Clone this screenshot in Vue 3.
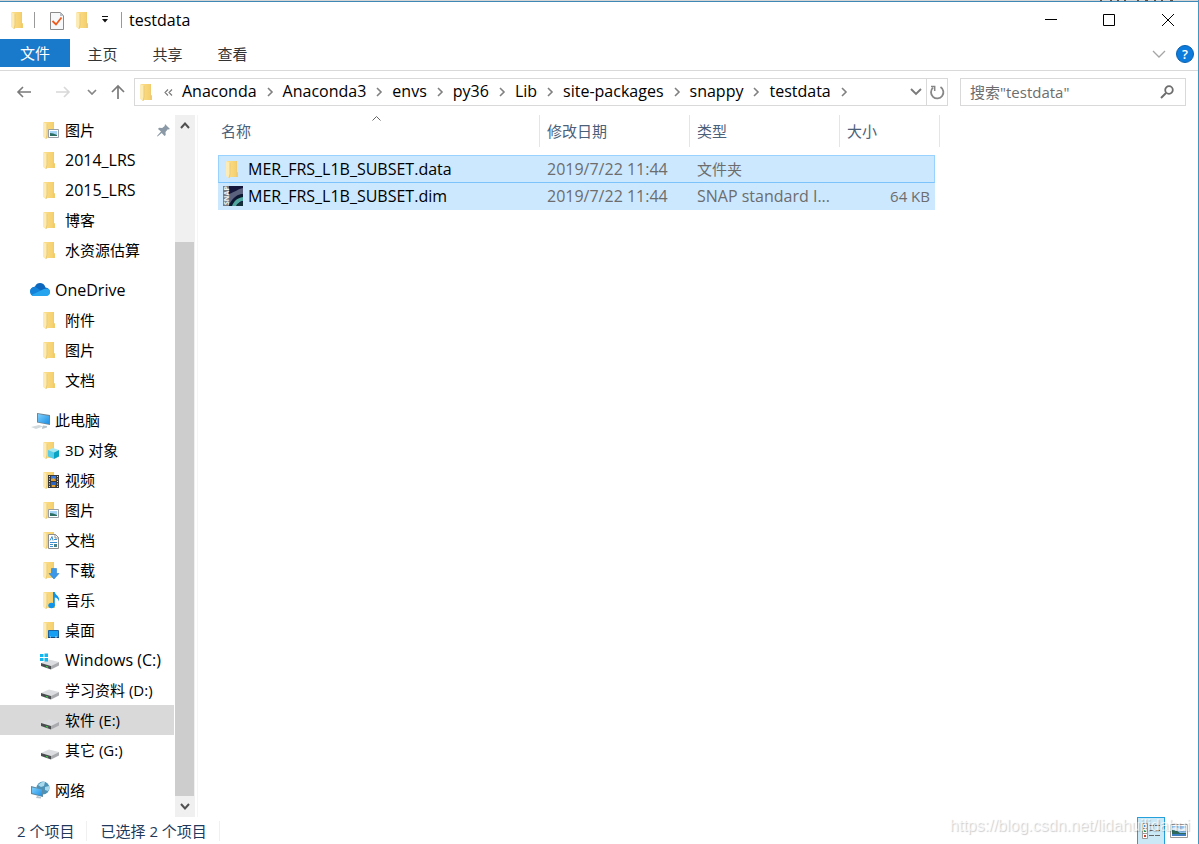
<script setup>
import { ref } from 'vue'

const tabs = ['主页', '共享', '查看']
const crumbs = ['Anaconda', 'Anaconda3', 'envs', 'py36', 'Lib', 'site-packages', 'snappy', 'testdata']
const query = ref('')

const groups = [
  {
    items: [
      { label: '图片', icon: 'picture', pinned: true },
      { label: '2014_LRS', icon: 'folder' },
      { label: '2015_LRS', icon: 'folder' },
      { label: '博客', icon: 'folder' },
      { label: '水资源估算', icon: 'folder' },
    ],
  },
  {
    items: [
      { label: 'OneDrive', icon: 'cloud', root: true },
      { label: '附件', icon: 'folder' },
      { label: '图片', icon: 'folder' },
      { label: '文档', icon: 'folder' },
    ],
  },
  {
    items: [
      { label: '此电脑', icon: 'pc', root: true },
      { label: '3D 对象', icon: 'cube' },
      { label: '视频', icon: 'video' },
      { label: '图片', icon: 'picture' },
      { label: '文档', icon: 'document' },
      { label: '下载', icon: 'download' },
      { label: '音乐', icon: 'music' },
      { label: '桌面', icon: 'desktop' },
      { label: 'Windows (C:)', icon: 'windrive' },
      { label: '学习资料 (D:)', icon: 'drive' },
      { label: '软件 (E:)', icon: 'drive', active: true },
      { label: '其它 (G:)', icon: 'drive' },
    ],
  },
  { items: [{ label: '网络', icon: 'network', root: true }] },
]

const folderBased = ['folder', 'picture', 'cube', 'video', 'document', 'download', 'music', 'desktop']
const isLatin = (s) => /^[ -~]+$/.test(s)

const files = [
  { name: 'MER_FRS_L1B_SUBSET.data', date: '2019/7/22 11:44', type: '文件夹', size: '', icon: 'folder', focused: true },
  { name: 'MER_FRS_L1B_SUBSET.dim', date: '2019/7/22 11:44', type: 'SNAP standard I...', size: '64 KB', icon: 'snap' },
]
</script>

<template>
  <div class="window">
    <svg class="defs" aria-hidden="true">
      <defs>
        <linearGradient id="fold" x1="0" y1="0" x2="1" y2="0">
          <stop offset="0" stop-color="#fbdf8b" />
          <stop offset="1" stop-color="#f4cd68" />
        </linearGradient>
        <linearGradient id="screen" x1="0" y1="0" x2="1" y2="1">
          <stop offset="0" stop-color="#7fd0fb" />
          <stop offset="1" stop-color="#1c8fe6" />
        </linearGradient>
        <symbol id="folder" viewBox="0 0 20 20">
          <path d="M4 2h10v11l1 1v4H4z" fill="url(#fold)" />
          <path d="M13 2h1v11l1 1v4h-2z" fill="#f0cb70" />
          <path d="M3 2l4 2v11l-1 4-3-2z" fill="#fdebb6" />
          <path d="M7 4v11l-1 4" fill="none" stroke="#ebca74" stroke-width="1" />
        </symbol>
      </defs>
    </svg>

    <div class="backdrop" aria-hidden="true">
      <svg width="74" height="1" viewBox="0 0 74 1"><path d="M0 .5h2M10 .5h2M17 .5h2M24 .5h2M37 .5h2M45 .5h3M54 .5h2M61 .5h2M70 .5h3" stroke="#5c5247" /></svg>
    </div>

    <header class="titlebar">
      <svg class="ic20 app-icon" viewBox="0 0 20 20"><use href="#folder" /></svg>
      <span class="bar"></span>
      <button class="quick" aria-label="属性">
        <svg class="ic20" viewBox="0 0 20 20">
          <path d="M3.500 2.500h10l3 3v14h-13z" fill="#f7f8f9" stroke="#8b8b8b" />
          <path d="M13 2l4 4h-4z" fill="#b9bfc4" />
          <path d="M5.500 11l3.500 3.500 5.500-7" fill="none" stroke="#ee5a1c" stroke-width="1.8" />
        </svg>
      </button>
      <button class="quick quick-new" aria-label="新建文件夹">
        <svg class="ic20" viewBox="0 0 20 20"><use href="#folder" /></svg>
      </button>
      <button class="quick-more" aria-label="自定义快速访问工具栏">
        <svg width="8" height="8" viewBox="0 0 8 8"><path d="M1 0h6v1H1zM1 3h6L4 6.500z" fill="#111" /></svg>
      </button>
      <span class="bar"></span>
      <h1 class="title">testdata</h1>
      <div class="controls">
        <button aria-label="最小化"><svg width="12" height="12" viewBox="0 0 12 12"><path d="M0 5.500h12" stroke="#000" /></svg></button>
        <button aria-label="最大化"><svg width="12" height="12" viewBox="0 0 12 12"><path d="M.5.5h11v11H.5z" stroke="#000" fill="none" /></svg></button>
        <button aria-label="关闭"><svg width="12" height="12" viewBox="0 0 12 12"><path d="M0 0l12 12M12 0L0 12" stroke="#000" /></svg></button>
      </div>
    </header>

    <nav class="ribbon">
      <button class="file-tab">文件</button>
      <button v-for="t in tabs" :key="t" class="tab">{{ t }}</button>
      <button class="expand" aria-label="展开功能区">
        <svg width="14" height="8" viewBox="0 0 14 8"><path d="M1 1l6 6 6-6" fill="none" stroke="#a5a5a5" stroke-width="1.3" /></svg>
      </button>
      <button class="help" aria-label="帮助">?</button>
    </nav>

    <div class="address-row">
      <button class="nav-btn back" aria-label="后退">
        <svg width="16" height="12" viewBox="0 0 16 12"><path d="M15 6H2M7 1L2 6l5 5" fill="none" stroke="#7a7a7a" stroke-width="1.6" /></svg>
      </button>
      <button class="nav-btn forward" aria-label="前进">
        <svg width="16" height="12" viewBox="0 0 16 12"><path d="M1 6h13M9 1l5 5-5 5" fill="none" stroke="#d8d8d8" stroke-width="1.6" /></svg>
      </button>
      <button class="nav-btn recent" aria-label="最近的位置">
        <svg width="10" height="6" viewBox="0 0 10 6"><path d="M1 1l4 4 4-4" fill="none" stroke="#868686" stroke-width="1.7" /></svg>
      </button>
      <button class="nav-btn up" aria-label="上移">
        <svg width="14" height="16" viewBox="0 0 14 16"><path d="M7 15V2M1 8l6-6 6 6" fill="none" stroke="#7a7a7a" stroke-width="1.7" /></svg>
      </button>
      <div class="address">
        <svg class="ic20 addr-icon" viewBox="0 0 20 20"><use href="#folder" /></svg>
        <svg class="overflow" width="9" height="7" viewBox="0 0 9 7"><path d="M4 .5l-3 3 3 3M8 .5l-3 3 3 3" fill="none" stroke="#777" stroke-width="1.1" /></svg>
        <template v-for="c in crumbs" :key="c">
          <a href="#" class="crumb">{{ c }}</a>
          <svg class="sep" width="26" height="10" viewBox="0 0 26 10"><path d="M11 1l4 4-4 4" fill="none" stroke="#808080" stroke-width="1.6" /></svg>
        </template>
        <button class="drop" aria-label="以前的位置">
          <svg width="12" height="8" viewBox="0 0 12 8"><path d="M1 1l5 5 5-5" fill="none" stroke="#7a7a7a" stroke-width="1.9" /></svg>
        </button>
        <button class="refresh" aria-label="刷新">
          <svg width="16" height="16" viewBox="0 0 16 16">
            <path d="M11.500 3A6.200 6.200 0 1 1 4 3.700" fill="none" stroke="#868686" stroke-width="1.8" />
            <path d="M2 2.500h3.700V7" fill="none" stroke="#868686" stroke-width="1.5" />
          </svg>
        </button>
      </div>
      <label class="search">
        <input v-model="query" type="text" placeholder='搜索"testdata"' aria-label='搜索"testdata"' />
        <svg width="14" height="14" viewBox="0 0 14 14">
          <circle cx="9" cy="5" r="3.800" fill="none" stroke="#6d6d6d" stroke-width="1.8" />
          <path d="M6 8l-5 5" stroke="#6d6d6d" stroke-width="2" />
        </svg>
      </label>
    </div>

    <div class="body">
      <aside class="tree">
        <ul v-for="(g, gi) in groups" :key="gi" class="group">
          <li v-for="(it, i) in g.items" :key="i">
            <a href="#" class="node" :class="{ root: it.root, active: it.active }">
              <svg class="ic20" viewBox="0 0 20 20">
                <use v-if="folderBased.includes(it.icon)" href="#folder" />
                <g v-if="it.icon === 'picture'">
                  <path d="M8.500 9.500h10v8h-10z" fill="#fff" stroke="#9aa0a6" />
                  <path d="M10 11h7v5h-7z" fill="#a7d4f4" />
                  <path d="M10 13q3 0 7 2v1h-7z" fill="#2d6e63" />
                </g>
                <g v-else-if="it.icon === 'cube'">
                  <path d="M13 8l6 2-5 2.500-6-2.500z" fill="#a5e9f5" />
                  <path d="M8 10l6 2.500V19l-6-2.500z" fill="#58cdea" />
                  <path d="M19 10l-5 2.500V19l5-2.500z" fill="#09a3c4" />
                </g>
                <g v-else-if="it.icon === 'video'">
                  <path d="M8 5h11v13H8z" fill="#3a3a3a" />
                  <path d="M11 6h5v5h-5z" fill="#397be0" />
                  <path d="M11 12h5v5h-5z" fill="#2c64c4" />
                  <path d="M11 9l3-1 2 3h-5zM12 15h3v2h-3z" fill="#e0a034" />
                  <path d="M9.500 6v12M17.500 6v12" stroke="#e4e4e4" stroke-dasharray="1 1.500" />
                </g>
                <g v-else-if="it.icon === 'document'">
                  <path d="M8.500 4.500h7l3 3v11h-10z" fill="#fff" stroke="#8d8d8d" />
                  <path d="M15 4v4h4" fill="none" stroke="#8d8d8d" />
                  <path d="M10 10.500l2-4 1 4M14 9.500h3M10 12.500h7M10 14.500h3M10 16.500h3" fill="none" stroke="#3d8fd0" />
                  <path d="M14 14h3v3h-3z" fill="#4b7f87" />
                </g>
                <path v-else-if="it.icon === 'download'" d="M11.500 8.500h5v5H19L14 19l-5-5.500h2.500z" fill="#3b97e8" stroke="#2c7fcb" stroke-width=".6" />
                <g v-else-if="it.icon === 'music'" fill="#0f94ea">
                  <ellipse cx="11.500" cy="15.500" rx="3.200" ry="2.800" />
                  <path d="M13 2h1.800c.4 3.500 5.600 4 4 9.500-.3-2.500-2-3.800-4-4V16H13z" />
                </g>
                <g v-else-if="it.icon === 'desktop'">
                  <path d="M8.500 10.500h10v7h-10z" fill="#16a0f3" stroke="#1a64a3" />
                  <path d="M8 17h11v1H8z" fill="#154a7d" />
                  <path d="M10 17h1M15 17h2" stroke="#bde4ff" />
                </g>
                <g v-else-if="it.icon === 'cloud'">
                  <path d="M3 14.500C-1 13.500-.5 7.500 5 6.500 7 1.500 14 2 15.500 7.500 21 8 21 14.500 17 15.500H4z" fill="#0c67bd" />
                  <path d="M0 11.500C0 8.500 3 6.500 6 7.300l7 4.700-9 4C1.500 16 0 14 0 11.500z" fill="#1482d8" />
                  <path d="M14 9c5-2 6.500 1.500 6 4-.4 2-2 3-3.500 3H4c-1 0-2-.5-2.500-1z" fill="#27a4ee" />
                </g>
                <g v-else-if="it.icon === 'pc'">
                  <path d="M7 3l13 2v10L7 12.500z" fill="#6d8494" />
                  <path d="M8 4l11 2v8L8 12z" fill="url(#screen)" />
                  <path d="M1 17l8-2 4 1.500L6 19z" fill="#d3dade" />
                  <path d="M13 15.500l4 .5v1.500l-5 1.500v-1z" fill="#b9c5cc" />
                </g>
                <g v-else-if="it.icon === 'network'">
                  <circle cx="13" cy="8" r="6.500" fill="#4d93b8" />
                  <path d="M8 5q4-4 7-3l-1 4-3 1zM15 7l4-1q1 3-1 5l-3-1z" fill="#a9d9ec" />
                  <path d="M1 6l12 3v8L1 14z" fill="#5c8ba5" />
                  <path d="M2 7.500l10 2v6.500l-10-3z" fill="url(#screen)" />
                  <path d="M7 16l4 1v1.500l-5-.5z" fill="#b7c3ca" />
                </g>
                <g v-else-if="it.icon === 'drive' || it.icon === 'windrive'">
                  <path d="M1 13l8-3.500 10 2.500-8 4z" fill="#dcdde0" />
                  <path d="M1 13l10 3v3.500L1 16z" fill="#4a4d50" />
                  <path d="M19 12l-8 4v3.500l8-4z" fill="#a9abaf" />
                  <path d="M6 16.500l2 .6" stroke="#3fd34a" stroke-width="1.300" />
                  <path v-if="it.icon === 'windrive'" d="M0 4h3.500v3H0zM4.500 3.500H8V7H4.500zM0 8h3.500v3H0zM4.500 8H8v3.500H4.500z" fill="#12b6f0" />
                </g>
              </svg>
              <span class="label" :class="{ latin: isLatin(it.label) }">{{ it.label }}</span>
              <svg v-if="it.pinned" class="pin" width="13" height="13" viewBox="0 0 13 13">
                <path d="M8 0l5 5-1.500.5-.7-.3L8.500 8l.2 3-1.200 1L4.700 9 .5 12.500 0 12l4-4.500L1 5l1-1.200 3.200.2L7.700 2z" fill="#8a99a5" />
              </svg>
            </a>
          </li>
        </ul>
      </aside>

      <div class="scroll" aria-hidden="true">
        <button class="scroll-btn" tabindex="-1"><svg width="10" height="7" viewBox="0 0 10 7"><path d="M1 6l4-4.500L9 6" fill="none" stroke="#505050" stroke-width="2" /></svg></button>
        <div class="track"><div class="thumb"></div></div>
        <button class="scroll-btn" tabindex="-1"><svg width="10" height="7" viewBox="0 0 10 7"><path d="M1 1l4 4.500L9 1" fill="none" stroke="#505050" stroke-width="2" /></svg></button>
      </div>

      <main class="content">
        <table class="files">
          <colgroup>
            <col class="c-name" /><col class="c-mid" /><col class="c-mid" /><col class="c-size" /><col class="c-edge" />
          </colgroup>
          <thead>
            <tr>
              <th>
                <div class="head first">名称</div>
                <svg class="sort" width="9" height="5" viewBox="0 0 9 5"><path d="M.5 4.500l4-4 4 4" fill="none" stroke="#666" /></svg>
              </th>
              <th><div class="head">修改日期</div></th>
              <th><div class="head">类型</div></th>
              <th colspan="2"><div class="head">大小</div></th>
            </tr>
          </thead>
          <tbody>
            <tr v-for="f in files" :key="f.name" :class="{ focused: f.focused }">
              <td>
                <div class="file">
                  <svg v-if="f.icon === 'folder'" class="ic20" viewBox="0 0 20 20"><use href="#folder" /></svg>
                  <svg v-else class="ic20" viewBox="0 0 20 20">
                    <path d="M0 0h20v20H0z" fill="#14163c" />
                    <path d="M6 8C12 6 15 3 20 2v6C14 8 10 12 7 17H6z" fill="#59617c" />
                    <path d="M7 19C10 13 14 9 20 8v3c-5 1-7 4-9 9H7z" fill="#0b1a30" />
                    <path d="M9 20c2-5 5-8 11-9v4c-3 0-5 2-6 5z" fill="#4fa79f" />
                    <path d="M13 20c1-3 4-4 7-4v4z" fill="#17313b" />
                    <path d="M0 0h6v20H0z" fill="#777a80" />
                    <text class="snap-text" transform="translate(6 19) rotate(-90)">SNAP</text>
                  </svg>
                  <span class="latin">{{ f.name }}</span>
                </div>
              </td>
              <td class="meta latin">{{ f.date }}</td>
              <td class="meta" :class="{ latin: isLatin(f.type) }">{{ f.type }}</td>
              <td class="meta size">{{ f.size }}</td>
              <td class="edge"></td>
            </tr>
          </tbody>
        </table>
      </main>
    </div>

    <footer class="status">
      <span class="stat">2 个项目</span>
      <span class="stat">已选择 2 个项目</span>
      <div class="views">
        <button class="view on" aria-label="详细信息">
          <svg width="20" height="18" viewBox="0 0 20 18">
            <path d="M1.500 1.500h5v5h-5zM1.500 6.500h5v5h-5zM1.500 11.500h5v5h-5z" fill="#fff" stroke="#999" />
            <path d="M3 3h2v2H3z" fill="#3a78c8" /><path d="M3 8h2v2H3z" fill="#3f9a48" /><path d="M3 13h2v2H3z" fill="#c9402c" />
            <path d="M8 3.500h5M14 3.500h5M8 8.500h5M14 8.500h5M8 13.500h5M14 13.500h5" stroke="#666" />
          </svg>
        </button>
        <button class="view" aria-label="大图标">
          <svg width="18" height="14" viewBox="0 0 18 14">
            <path d="M.5.5h17v13H.5z" fill="#fff" stroke="#999" />
            <path d="M2 2h14v10H2z" fill="#8fc2f0" />
            <path d="M2 4q4-2 8 1l6-1v3H2z" fill="#dceefb" />
            <path d="M2 6q5 0 8 3h6v1H2z" fill="#2e6a5a" />
            <path d="M2 10h14v2H2z" fill="#3e7fc0" />
          </svg>
        </button>
      </div>
      <span class="watermark">https://blog.csdn.net/lidahuilidahui</span>
    </footer>
  </div>
</template>

<style>
html,
body {
  margin: 0;
  background: #fff;
}
</style>

<style scoped>
* {
  box-sizing: border-box;
}
.window {
  position: relative;
  display: flex;
  flex-direction: column;
  min-height: 100vh;
  background: #fff;
  border-right: 1px solid #3f97c5;
  color: #000;
  font-family: "Open Sans", "Noto Sans CJK SC", sans-serif;
  font-size: 15px;
  line-height: 20px;
}
.latin {
  font-size: 16px;
}
.defs {
  position: absolute;
  width: 0;
  height: 0;
}
button {
  display: flex;
  align-items: center;
  justify-content: center;
  padding: 0;
  border: 0;
  background: none;
  font: inherit;
  color: inherit;
}
a {
  color: inherit;
  text-decoration: none;
}
svg {
  display: block;
  flex: none;
}
.ic20 {
  width: 20px;
  height: 20px;
}
.backdrop {
  display: flex;
  justify-content: flex-end;
  height: 2px;
  padding-right: 24px;
  background: #d5d5d5;
  border-bottom: 1px solid #3f87b5;
}
.titlebar {
  display: flex;
  align-items: center;
  height: 37px;
  padding: 0 0 2px 8px;
}
.bar {
  width: 1px;
  height: 16px;
  background: #999;
}
.app-icon {
  margin-right: 6px;
}
.quick {
  margin-left: 12px;
}
.quick-new {
  margin-left: 6px;
}
.quick-more {
  width: 24px;
  height: 18px;
  margin-right: 4px;
}
.title {
  margin: 0 0 0 7px;
  font-size: 16px;
  font-weight: 400;
}
.controls {
  display: flex;
  margin-left: auto;
}
.controls button {
  width: 58px;
  height: 34px;
}
.controls button:last-child {
  width: 60px;
}
.ribbon {
  display: flex;
  align-items: center;
  height: 32px;
  padding: 0 4px 2px 0;
  border-bottom: 1px solid #d9d9d9;
}
.file-tab {
  align-self: flex-start;
  width: 70px;
  height: 28px;
  background: #1979ca;
  color: #fff;
}
.tab {
  width: 65px;
  color: #333;
}
.expand {
  width: 24px;
  height: 24px;
  margin-left: auto;
}
.help {
  width: 18px;
  height: 18px;
  margin-left: 5px;
  border: 1px solid #0761b0;
  border-radius: 50%;
  background: #0c7bdc;
  color: #fff;
  font-size: 13px;
  font-weight: 600;
  line-height: 16px;
}
.address-row {
  display: flex;
  align-items: center;
  height: 42px;
  padding: 0 12px 0 16px;
}
.nav-btn {
  height: 28px;
}
.forward {
  margin-left: 23px;
}
.recent {
  margin-left: 16px;
}
.up {
  margin: 0 9px 0 14px;
}
.address {
  display: flex;
  flex: 1;
  align-items: center;
  height: 28px;
  border: 1px solid #d9d9d9;
}
.addr-icon {
  margin-left: 2px;
}
.overflow {
  margin: 0 9px 0 7px;
}
.crumb {
  padding-bottom: 2px;
  font-size: 16px;
  white-space: nowrap;
}
.drop {
  width: 20px;
  height: 26px;
  margin-left: auto;
}
.refresh {
  width: 21px;
  height: 26px;
  border-left: 1px solid #d9d9d9;
}
.search {
  display: flex;
  align-items: center;
  width: 226px;
  height: 28px;
  margin-left: 12px;
  padding: 0 11px 0 9px;
  border: 1px solid #d9d9d9;
}
.search input {
  flex: 1;
  min-width: 0;
  padding: 0;
  border: 0;
  outline: 0;
  background: none;
  font: inherit;
  color: #000;
}
.search input::placeholder {
  color: #6d6d6d;
  opacity: 1;
}
.body {
  display: flex;
  flex: 1;
  padding-top: 2px;
}
.tree {
  width: 174px;
}
.group {
  margin: 0 0 10px;
  padding: 0;
  list-style: none;
}
.group:last-child {
  margin-bottom: 0;
}
.node {
  display: flex;
  align-items: center;
  height: 30px;
  padding: 0 4px 0 40px;
  white-space: nowrap;
}
.node.root {
  padding-left: 30px;
}
.node.active {
  background: #d9d9d9;
}
.label {
  margin-left: 5px;
}
.pin {
  margin-left: auto;
}
.scroll {
  display: flex;
  flex-direction: column;
  width: 20px;
  margin-left: 1px;
  background: #f0f0f0;
}
.scroll-btn {
  width: 19px;
  height: 21px;
}
.track {
  display: flex;
  flex: 1;
  flex-direction: column;
  justify-content: flex-end;
}
.thumb {
  width: 19px;
  height: 84%;
  background: #cdcdcd;
}
.content {
  flex: 1;
  min-width: 0;
  margin-left: 2px;
  padding-left: 20px;
  border-left: 1px solid #f5f5f5;
}
.files {
  width: 722px;
  table-layout: fixed;
  border-collapse: separate;
  border-spacing: 0;
}
.c-name {
  width: 322px;
}
.c-mid {
  width: 150px;
}
.c-size {
  width: 95px;
}
.c-edge {
  width: 5px;
}
th {
  position: relative;
  height: 40px;
  padding: 0;
  vertical-align: top;
  text-align: left;
  font-weight: 400;
  color: #4c607a;
}
.head {
  height: 32px;
  padding-left: 7px;
  border-right: 1px solid #e5e5e5;
  line-height: 32px;
}
.head.first {
  padding-left: 3px;
}
.sort {
  position: absolute;
  top: 1px;
  left: 154px;
}
td {
  height: 27px;
  padding: 0 0 2px 7px;
  background: #cce8ff;
  white-space: nowrap;
}
td:first-child {
  padding-left: 5px;
}
.focused td {
  height: 28px;
  padding-bottom: 0;
  border-top: 1px solid #99d1ff;
  border-bottom: 1px solid #7cc3fb;
}
.focused td:first-child {
  padding-left: 4px;
  border-left: 1px solid #99d1ff;
}
.focused .size {
  border-right: 1px solid #99d1ff;
}
tbody td.edge {
  padding: 0;
  border: 0;
  background: none;
}
.file {
  display: flex;
  align-items: center;
  gap: 5px;
}
.snap-text {
  font-size: 7px;
  font-weight: 700;
  fill: #f4f4f4;
}
.meta {
  color: #6d6d6d;
}
td.size {
  padding-right: 5px;
  text-align: right;
}
.status {
  position: relative;
  display: flex;
  align-items: center;
  height: 27px;
  padding: 0 10px 0 17px;
  color: #1e395b;
}
.stat {
  padding-right: 12px;
  margin-right: 13px;
  border-right: 1px solid #f0f0f0;
}
.views {
  display: flex;
  gap: 5px;
  margin-left: auto;
}
.view {
  width: 18px;
  height: 27px;
}
.view.on {
  width: 28px;
  border: 1px solid #26a0da;
  border-bottom: 0;
  background: #cbe8f6;
}
.watermark {
  position: absolute;
  top: 0;
  right: 8px;
  color: rgba(255, 255, 255, 0.7);
  font-family: "Liberation Sans", Arial, sans-serif;
  font-size: 16px;
  line-height: 18px;
  text-shadow: 1px 1px 1px rgba(0, 0, 0, 0.2);
  pointer-events: none;
}
</style>
